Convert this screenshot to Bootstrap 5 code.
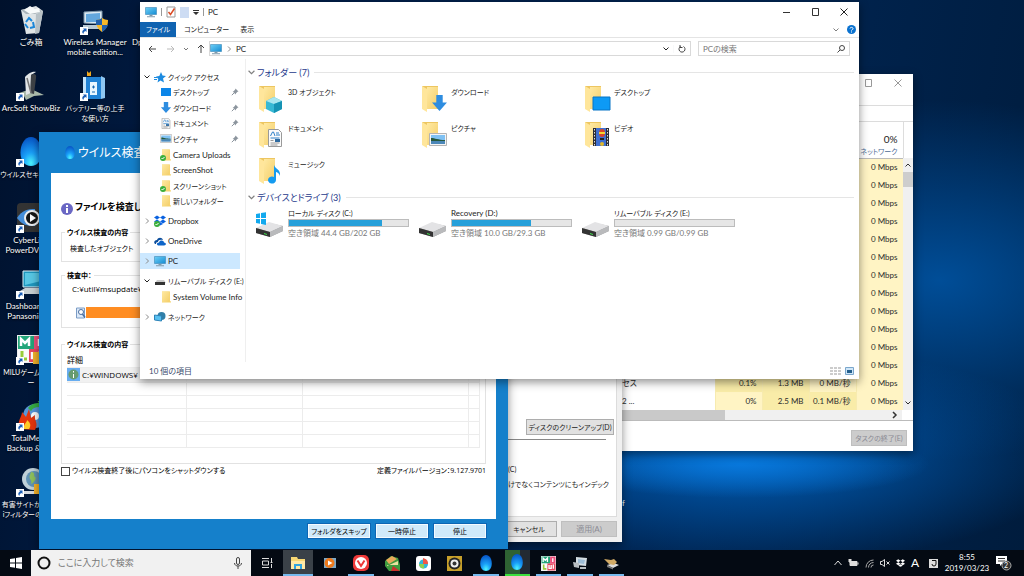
<!DOCTYPE html>
<html lang="ja">
<head>
<meta charset="utf-8">
<meta name="viewport" content="width=device-width, initial-scale=1">
<title>PC</title>
<link href="https://cdn.jsdelivr.net/npm/bootstrap@5.3.0/dist/css/bootstrap.min.css" rel="stylesheet">
<style>
html,body{height:100%}
body{font-family:Lato,"Noto Sans CJK JP",sans-serif;font-feature-settings:"palt";font-size:8px;line-height:10px;color:#222;overflow:hidden}
svg{display:block;flex:none}
a{color:inherit;text-decoration:none}
button,input{font:inherit;font-feature-settings:inherit;color:inherit}
button{padding:0;border:0;background:none}
.kana{font-size:7px}
.desk{min-height:100vh;background:
 radial-gradient(ellipse 190px 34px at 740px 464px,#0878dc 0,rgba(8,110,210,0) 100%),
 radial-gradient(ellipse 330px 110px at 750px 455px,rgba(0,100,195,.9) 0,rgba(0,80,165,0) 100%),
 radial-gradient(ellipse 290px 180px at 940px 280px,rgba(0,80,156,.95) 0,rgba(0,60,120,0) 100%),
 linear-gradient(100deg,#00112c 0,#001c45 20%,#002450 70%,#001c3d 100%)}
.icons{grid-template-columns:62px 66px 60px;grid-auto-rows:66px;color:#fff;text-shadow:0 1px 2px #000}
.icons a{display:flex;flex-direction:column;align-items:center;text-align:center;white-space:nowrap;padding-top:5px;gap:2px}
.stray{left:620px;top:498px;color:#fff}
.win{position:absolute;background:#fff;box-shadow:0 3px 9px rgba(0,0,0,.45)}
.muted-ink{color:#777}
/* task manager */
.w-task{left:600px;right:111px;top:74px;bottom:125px;color:#2b2b2b}
.t-bar{height:31px;gap:21px;padding:5px 11px 0 0;color:#999}
.t-tabs{height:17px;border-top:1px solid #dcdcdc;border-bottom:1px solid #dcdcdc}
.t-grid{border-collapse:collapse;table-layout:fixed;width:303px}
.t-grid th{height:36px;vertical-align:bottom;text-align:right;font-weight:400;padding:0 5px 1px 0;color:#4c6a94;border-right:1px solid #ddd;border-bottom:1px solid #bbb;line-height:12px;white-space:nowrap}
.t-grid th b{display:block;font-weight:400;font-size:10px;color:#222}
.t-grid td{height:18px;padding:0 5px 0 0;text-align:right;background:#fff4c4;border-right:1px solid #f7ebb0;white-space:nowrap}
.t-grid td:first-child{background:#fff;text-align:left;padding-left:22px}
.t-grid .hot{background:#f9eca8}
.v-scroll{width:10px;margin-top:84px;background:#f0f0f0;height:252px;top:0;right:0}
.v-thumb{height:15px;background:#cdcdcd;width:10px}
.h-scroll{height:10px;background:#f0f0f0;margin-right:11px}
.h-scroll i{display:block;width:125px;background:#c9c9c9}
.t-foot{border-top:1px solid #bbb;padding:9px 6px 0 0}
.grey-btn{background:#e1e1e1;border:1px solid #adadad;height:16px;line-height:13px;white-space:nowrap}
.grey-btn:disabled{background:#ccc;border-color:#bfbfbf;color:#8b8b94}
.w55{width:56px}.w88{width:88px}
/* properties */
.w-prop{left:300px;right:402px;top:150px;bottom:34px;background:#f0f0f0;padding:4px 5px 5px}
.sheet{border:1px solid #dcdcdc;background:#fff;padding:0 2px 27px 0;white-space:nowrap}
.sheet hr{margin:4px 8px 24px 0;border-color:#888;opacity:1}
.sheet p{margin:0 0 5px 202px}
/* virus scanner */
.w-virus{left:39px;right:516px;top:132px;bottom:27px;background:#1580cb;padding:0 12px;font-family:"Open Sans","Noto Sans CJK JP",sans-serif;color:#000}
.v-title{height:41px;padding-left:14px;color:#fff;font-size:12px;gap:3px}
.v-body{padding:0 10px;height:346px}
.v-head{padding-top:26px;font-size:9px;line-height:16px;font-weight:700;height:53px;gap:2px;margin-bottom:6px}
fieldset{border:1px solid #e2e2e2;position:relative;margin:0 0 13px;padding:11px 8px 0;white-space:nowrap}
fieldset legend{position:absolute;top:-6px;left:3px;width:auto;margin:0;padding:0 2px;background:#fff;font-size:7px;line-height:11px;font-weight:700;float:none}
.f1{height:30px}.f2{height:53px;margin-bottom:16px;padding:8px 10px}.f3{height:120px;padding:8px 5px;margin-bottom:2px}
.prog{margin-top:13px;padding-left:4px}
.orange{height:11px;background:#ff8d22}
.log{width:100%;table-layout:fixed;border-collapse:collapse}
.log th{font-weight:400;height:14px;padding:0}
.log td{height:13px;border:1px solid #ececec;border-left:0;border-top-color:#eee;padding:0}
.log tr.cur td{height:15px;background:#f1f1f1}
.log tr.cur span{gap:2px}
.chk{appearance:none;width:9px;height:9px;border:1px solid #444;margin:0;background:#fff}
.foot-row label{gap:2px}
.v-btns{gap:6px;padding:5px 10px 0}
.blue-btn{height:14px;background:#d0eafa;border:1px solid #f4fbff;line-height:11px;outline:1px solid #0c66b4;white-space:nowrap;width:52px}
.blue-btn.wide{width:62px}
/* explorer */
.w-exp{left:140px;right:165px;top:2px;bottom:197px;display:flex;flex-direction:column}
.e-title{height:20px;padding:0 11px 0 5px;gap:4px}
.ctl{gap:21px}
.bar1{width:1px;height:8px;background:#999}
.e-tabs{height:16px;border-bottom:1px solid #e4e4e4;padding-right:3px}
.e-tabs a{line-height:15px;padding:0 3px 0 8px}
.e-tabs .file{background:#1063b1;color:#fff;padding:0 0 0 6px;width:36px;white-space:nowrap}
.e-addr{height:21px;padding:0 9px 0 7px}
.box{border:1px solid #d9d9d9;height:15px;min-width:0}
.srch{width:152px;margin-left:7px}
.srch input{border:0;outline:0;width:120px;padding:0 0 0 4px;height:12px;color:#666}
.srch input::placeholder,.t-search input::placeholder{color:#777;opacity:1}
.nav-tree{width:106px;border-right:1px solid #efefef;padding:10px 3px 0 0;flex:none}
.quick{display:grid;grid-template-rows:repeat(9,1fr);height:140px}
.nav-tree a{display:flex;align-items:center;height:16px;padding-left:4px;gap:4px;white-space:nowrap;margin-top:4px}
.nav-tree .top svg+svg{margin-right:-2px}
.nav-tree .quick a{margin-top:0;height:auto;min-height:0}
.nav-tree a.kid{margin-top:0;padding-left:20px;gap:1px;padding-right:3px}
.nav-tree .on{background:#cce8ff;margin-right:2px}
.pane{padding:8px 5px 0 2px;min-width:0}
.pane h2{font-size:9px;line-height:11px;font-weight:400;color:#26398c;margin:0;display:flex;align-items:center;gap:2px;white-space:nowrap}
.pane h2::after{content:"";height:1px;background:#e5e5e5;flex:1;margin-left:3px}
.tiles{display:grid;grid-template-columns:repeat(auto-fill,163px);padding-left:11px;margin:5px 0 1px}
.tiles a{display:flex;gap:3px;height:36px}
.tiles a>span{padding-top:4px}
.tiles svg{margin-top:2px}
.tiles.drives{padding-left:7px;margin-top:4px}
.drives a>span{padding-top:1px;width:121px;flex:none;white-space:nowrap}
.meter{height:8px;border:1px solid #bcbcbc;background:#e6e6e6;margin:1px 0}
.meter i{display:block;height:6px;background:#26a0da}
.e-status{height:17px;padding:0 5px 0 9px;color:#3a4a6b}
/* taskbar */
.tb{position:absolute;inset:auto 0 0 0;height:26px;background:#040a13;color:#fff}
.tb button{height:26px;display:flex;align-items:center;justify-content:center;flex:none}
.sq{width:31px}
.t-search{background:#f1f1f1;width:220px;padding:0 9px 0 6px;gap:7px}
.t-search input{border:0;outline:0;background:none;flex:1;min-width:0;font-size:9px;padding:0;color:#444}
.apps{width:345px}
.apps button{flex:1;margin:0 3px;border-bottom:2px solid transparent;border-top:2px solid transparent}
.apps .run{border-bottom-color:#76b9ed}
.apps .here{background:#3a4148;flex:0 0 30px;margin:0 1px;border-top-color:#3a4148}
.apps .scan{background:linear-gradient(90deg,#2e6233 60%,#232a33 0);border-top:0;border-bottom-color:#3ce03c}
.tray{gap:6px;padding-right:12px}
.ime{font-size:12px;line-height:12px}
.clock{width:46px;text-align:center;line-height:11px}
</style>
</head>
<body>
<svg width="0" height="0" class="position-absolute" aria-hidden="true">
<defs>
<linearGradient id="fg" x2="1" y2="1"><stop stop-color="#ffe9a2"/><stop offset="1" stop-color="#f4cf6a"/></linearGradient>
<radialGradient id="dg" cx=".5" cy=".9" r=".9"><stop stop-color="#4df6ff"/><stop offset=".4" stop-color="#1aa0f8"/><stop offset="1" stop-color="#0652c4"/></radialGradient>
<linearGradient id="mg" x2="1" y2="1"><stop stop-color="#6ed0f7"/><stop offset="1" stop-color="#148bd2"/></linearGradient>
<symbol id="pc" viewBox="0 0 12 12"><path d="M.5 1.500h11v7H.5z" fill="url(#mg)" stroke="#3c86b5" stroke-width=".6"/><path d="M4.500 9h3v1h-3zM2 10.300h8v.9H2z" fill="#7f99ab"/></symbol>
<symbol id="fol" viewBox="0 0 12 12"><path d="M2 .5h8V10l1 .5v1H2z" fill="#f6d571"/><path d="M2 .5h7.500v10.500H2z" fill="url(#fg)"/></symbol>
<symbol id="folg" viewBox="0 0 12 12"><use href="#fol"/><circle cx="3" cy="9" r="3" fill="#3caf3d"/><path d="M1.500 9l1 1 2-2" stroke="#fff" fill="none"/></symbol>
<symbol id="big" viewBox="0 0 28 28"><path d="M0 1h16v23H5z" fill="#edc661"/><path d="M5 2h11v22H5z" fill="url(#fg)"/><path d="M0 1l5 3v23l-5-3z" fill="#ffe69b"/></symbol>
<symbol id="pin" viewBox="0 0 8 8"><path d="M4.500 .5L7.500 3.500l-1 .3-1.500 1.500-.3 1.200L1.700 3.500l1-.3L4.200 1.500z" fill="#8c959e"/><path d="M3 5L.8 7.200" stroke="#8c959e"/></symbol>
<symbol id="cr" viewBox="0 0 6 6"><path d="M2 .5L4.500 3 2 5.500" fill="none" stroke="#8a8a8a"/></symbol>
<symbol id="cd" viewBox="0 0 6 6"><path d="M.5 1.500L3 4l2.500-2.500" fill="none" stroke="currentColor"/></symbol>
<symbol id="drop" viewBox="0 0 12 16"><path d="M6 0C9.500 0 11.800 4 11.800 8.500S9.500 16 6 16 .2 13 .2 8.500 2.500 0 6 0z" fill="url(#dg)"/></symbol>
<symbol id="dbx" viewBox="0 0 12 10"><path d="M3 0l3 2-3 2-3-2zM9 0l3 2-3 2-3-2zM3 4l3 2-3 2-3-2zM9 4l3 2-3 2-3-2zM6 6.600l3 1.900L6 10 3 8.500z" fill="currentColor"/></symbol>
<symbol id="drv" viewBox="0 0 30 20"><path d="M1 11L14 5l14 3v5l-13 6-14-4z" fill="#9b9b9b"/><path d="M1 10L14 4l14 4-13 6z" fill="#e3e3e5"/><path d="M1 10l14 4v5L1 15z" fill="#333"/><path d="M15 14l13-6v5l-13 6z" fill="#b9babc"/><path d="M9 15l3 1v1l-3-1z" fill="#3ee04b"/></symbol>
<symbol id="sc" viewBox="0 0 8 8"><path d="M0 0h8v8H0z" fill="#fff"/><path d="M3 1.500h3.500V5L5.400 4C4 4.500 3.500 5.500 3.400 7 1.500 5.500 2.300 3.500 4 2.600z" fill="#1b5fb8"/></symbol>
<symbol id="pic" viewBox="0 0 18 13"><path d="M.5.5h17v12H.5z" fill="#f5f5f5" stroke="#b3b3b3"/><path d="M2 2h14v9H2z" fill="#7fc1f3"/><path d="M2 5c4 0 7 2 14 2v1H2z" fill="#26583b"/><path d="M2 8h14v3H2z" fill="#4b87b8"/></symbol>
<symbol id="doc" viewBox="0 0 14 18"><path d="M.5.5h10l3 3v14H.5z" fill="#fbfbfb" stroke="#9a9a9a"/><path d="M2.500 7L4.500 3h1L7 7M8 4h3M8 6h4M2.500 9h9" stroke="#2d80c8" fill="none"/><path d="M2.500 14h9M2.500 16h7M2.500 11.500h3" stroke="#999" fill="none"/><path d="M7 10h5v3H7z" fill="#2d6aa0"/></symbol>
<symbol id="down" viewBox="0 0 14 15"><path d="M4 0h6v7h4l-7 8-7-8h4z" fill="#2e8de0"/></symbol>
<symbol id="milu" viewBox="0 0 28 28"><path d="M0 0h28v28H0z" fill="#eee"/><path d="M1 1h16v13H1z" fill="#24a67a"/><path d="M17 1h10v13H17z" fill="#ef4f7c"/><path d="M1 14h11v13H1z" fill="#fafafa"/><path d="M12 14h15v13H12z" fill="#e9475f"/><path d="M4 11V4l4 4 4-4v7M15 17v6h4v-6M23 16v8M22 4v7" fill="none" stroke="#fff" stroke-width="2.500"/><path d="M5 16v8h5" fill="none" stroke="#99cc3a" stroke-width="3"/></symbol>
<symbol id="wx" viewBox="0 0 8 8"><path d="M.5.5l7 7m0-7l-7 7" stroke="currentColor" fill="none"/></symbol>
</defs></svg>

<main class="desk position-relative overflow-hidden">
<nav class="icons d-grid position-absolute" aria-label="デスクトップ">
<a href="#"><svg width="30" height="30" viewBox="0 0 30 30"><path d="M5 5l15-4 7 5-4 22-13 1z" fill="#dfe4e6"/><path d="M5 5l8-2 8 1 6 2-8 3-9 0z" fill="#aab4ba"/><path d="M8 5l6-4 5 3 4-1 1 4-10 2z" fill="#f8fafa"/><path d="M20 9l7-3-4 22-4 1z" fill="#b7c0c5"/><path d="M10 17l3-4 3 3M17 17l1 5-4 1M12 23l-3-4" fill="none" stroke="#1c86d8" stroke-width="2"/></svg>ごみ箱</a>
<a href="#"><svg width="30" height="30" viewBox="0 0 30 30"><path d="M4 7l18-1v13L4 18z" fill="#dbe9f3" stroke="#7b94a7"/><path d="M6 9l14-1v9H6z" fill="#63a7dd"/><path d="M3 20h19v4H3z" fill="#b9cad5"/><path d="M16 15c3 0 4-1 6-2 2 1 4 2 6 2 0 6-2 9-6 12-4-3-6-6-6-12z" fill="#f8b92a"/><path d="M22 13v7h-6v-5c3 0 4-1 6-2zM22 20h6c-1 3-3 5-6 7z" fill="#2160ad"/><use href="#sc" y="22" width="8" height="8"/></svg><span>Wireless Manager<br>mobile edition...</span></a>
<a href="#" class="align-items-start"><svg width="30" height="30"></svg><span class="ps-1">Dp</span></a>
<a href="#"><svg width="30" height="30" viewBox="0 0 30 30"><path d="M3 22l12-4 13 6-10 1-8 4-2-4z" fill="#a9b9a9"/><path d="M9 6c4-5 9-6 11-5l-5 3 2 17-7 3z" fill="#e2e6e8"/><path d="M15 4c3-2 6-1 5 3l-2 16-4-1z" fill="#3c4044"/><path d="M11 7l4 15" stroke="#777" stroke-width="1.500"/><use href="#sc" y="22" width="8" height="8"/></svg>ArcSoft ShowBiz</a>
<a href="#" class="kana"><svg width="30" height="30" viewBox="0 0 30 30"><path d="M7 0l2 2 2-2v5H7z" fill="#f0a81e"/><path d="M5 6h16v22H5z" fill="#2182d5"/><path d="M21 5l4 2v20l-4 1z" fill="#8fc7f2"/><path d="M3 6h3v22H3z" fill="#c5e4fb"/><path d="M10 11h7v13h-7z" fill="#eaf6ff"/><path d="M12 16h3m-1.500-1.500v3M12 21h3" stroke="#1868b0"/><use href="#sc" y="22" width="8" height="8"/></svg><span>バッテリー等の上手<br>な使い方</span></a><i></i>
<a href="#" class="kana"><svg width="30" height="30" viewBox="0 0 30 30"><use href="#drop" x="4" y="0" width="22" height="29"/><use href="#sc" y="22" width="8" height="8"/></svg><span>ウイルスセキュリティ</span></a><i></i><i></i>
<a href="#"><svg width="30" height="30" viewBox="0 0 30 30"><rect x="1" width="28" height="29" rx="4" fill="#333"/><path d="M1 15c5-8 11-9 18-9v17C11 23 6 22 1 15z" fill="#458ed9"/><circle cx="16" cy="15" r="7" fill="#151515" stroke="#eee" stroke-width="2"/><path d="M14 11l6 4-6 4z" fill="#fff"/><use href="#sc" y="22" width="8" height="8"/></svg><span>CyberLink<br>PowerDVD 12</span></a><i></i><i></i>
<a href="#"><svg width="30" height="30" viewBox="0 0 30 30"><path d="M7 2h20v16H7z" fill="#1f97be" stroke="#dceef5"/><path d="M9 4h16v8L9 16z" fill="#58c7e4"/><path d="M4 22l5-3h18l3 3v3H4z" fill="#c9d0d3"/><use href="#sc" y="22" width="8" height="8"/></svg><span>Dashboard for<br>Panasonic PC</span></a><i></i><i></i>
<a href="#" class="kana"><svg width="30" height="30" viewBox="0 0 30 30"><use href="#milu" x="1" width="28" height="28"/><path d="M17 17h12v12H17z" fill="#f3b22a"/><use href="#sc" y="22" width="8" height="8"/></svg><span>MILUゲームメニュ<br>ー</span></a><i></i><i></i>
<a href="#"><svg width="30" height="30" viewBox="0 0 30 30"><circle cx="19" cy="15" r="12" fill="#5796d8"/><circle cx="19" cy="15" r="4" fill="#fff"/><path d="M4 28C0 21 6 16 6 11l4 5 3-8 2 9 4-3c-1 6 4 8 0 15z" fill="#e3350d"/><path d="M8 28c-1-5 3-6 3-9 4 3 4 6 2 9z" fill="#ffcb27"/><path d="M12 7c3-4 7-5 11-5l-2-3 8 4-6 6v-3c-4 0-6 1-8 4z" fill="#37ae44"/><use href="#sc" y="22" width="8" height="8"/></svg><span>TotalMedia<br>Backup &amp; Rec</span></a><i></i><i></i>
<a href="#" class="kana"><svg width="30" height="30" viewBox="0 0 30 30"><circle cx="17" cy="12" r="11" fill="#bfd0d8"/><circle cx="18" cy="12" r="8" fill="#6193b5"/><path d="M15 5c5 0 2 4 4 5s-1 6-4 7c2-4-3-5-1-9z" fill="#8fc05c"/><path d="M6 24h20v3H6z" fill="#d6dadd"/><path d="M18 17h10v10H18z" fill="#f3b22a"/><use href="#sc" y="22" width="8" height="8"/></svg><span>有害サイトから守る<br>iフィルターのセット</span></a>
</nav>
<span class="stray position-absolute">if</span>

<section class="win w-task" aria-label="タスク マネージャー">
<div class="t-bar d-flex justify-content-end align-items-start"><svg width="8" height="8" viewBox="0 0 8 8"><path d="M.5.5h6v7h-6z" fill="none" stroke="currentColor"/></svg><svg width="8" height="8"><use href="#wx"/></svg></div>
<div class="t-tabs"></div>
<table class="t-grid">
<colgroup><col style="width:115px"><col style="width:47px"><col style="width:47px"><col style="width:47px"><col style="width:47px"></colgroup>
<thead><tr><th></th><th></th><th></th><th></th><th scope="col" class="kana"><b>0%</b>ネットワーク</th></tr></thead>
<tbody>
<tr><td></td><td></td><td></td><td></td><td>0 Mbps</td></tr><tr><td></td><td></td><td></td><td></td><td>0 Mbps</td></tr>
<tr><td></td><td></td><td></td><td></td><td>0 Mbps</td></tr><tr><td></td><td></td><td></td><td></td><td>0 Mbps</td></tr>
<tr><td></td><td></td><td></td><td></td><td>0 Mbps</td></tr><tr><td></td><td></td><td></td><td></td><td>0 Mbps</td></tr>
<tr><td></td><td></td><td></td><td></td><td>0 Mbps</td></tr><tr><td></td><td></td><td></td><td></td><td>0 Mbps</td></tr>
<tr><td></td><td></td><td></td><td></td><td>0 Mbps</td></tr><tr><td></td><td></td><td></td><td></td><td>0 Mbps</td></tr>
<tr><td></td><td></td><td></td><td></td><td>0 Mbps</td></tr><tr><td></td><td></td><td></td><td></td><td>0 Mbps</td></tr>
<tr><td>セス</td><td class="hot">0.1%</td><td class="hot">1.3 MB</td><td>0 MB/秒</td><td>0 Mbps</td></tr>
<tr><td>2 ...</td><td>0%</td><td class="hot">2.5 MB</td><td class="hot">0.1 MB/秒</td><td>0 Mbps</td></tr>
</tbody></table>
<div class="v-scroll position-absolute d-flex flex-column align-items-center"><svg class="my-1" width="6" height="6" viewBox="0 0 6 6"><path d="M.5 4.500L3 2l2.500 2.500" fill="none" stroke="#333"/></svg><div class="v-thumb"></div><svg class="mt-auto mb-1" width="6" height="6"><use href="#cd"/></svg></div>
<div class="h-scroll d-flex justify-content-between"><i></i><svg class="m-1 mt-0" width="6" height="10" viewBox="0 0 6 10"><path d="M1 2l3 3-3 3" fill="none" stroke="#333" stroke-width="1.500"/></svg></div>
<div class="t-foot d-flex justify-content-end"><button class="grey-btn w55 kana" disabled>タスクの終了(E)</button></div>
</section>

<section class="win w-prop d-flex flex-column" aria-label="プロパティ">
<div class="sheet kana flex-grow-1 d-flex flex-column justify-content-end align-items-stretch">
<div class="text-end"><button class="grey-btn w88">ディスクのクリーンアップ(D)</button></div>
<hr><p>(C)</p><p class="mb-0">けでなくコンテンツにもインデック</p>
</div>
<div class="d-flex justify-content-end pt-1 gap-1"><button class="grey-btn w55 kana">キャンセル</button><button class="grey-btn w55" disabled>適用(A)</button></div>
</section>

<section class="win w-virus" aria-label="ウイルス検査">
<div class="v-title d-flex align-items-center text-nowrap"><svg width="10" height="13"><use href="#drop"/></svg>ウイルス検査</div>
<div class="v-body bg-white">
<div class="v-head d-flex text-nowrap"><svg class="mt-1" width="12" height="12" viewBox="0 0 12 12"><circle cx="6" cy="6" r="6" fill="#6a67c4"/><path d="M5 5h2v5H5zM5 2h2v2H5z" fill="#fff"/></svg>ファイルを検査し</div>
<fieldset class="f1 kana"><legend>ウイルス検査の内容</legend>検査したオブジェクト</fieldset>
<fieldset class="f2"><legend>検査中：</legend>C:¥util¥msupdate¥
<div class="prog d-flex"><svg width="10" height="12" viewBox="0 0 10 12"><path d="M.5 1h8v10h-8z" fill="#dce9f8" stroke="#7b9cc6"/><circle cx="5" cy="5" r="2.500" fill="#fff" stroke="#4a6ea0"/><path d="M6.500 7L9 10.500" stroke="#4a6ea0" stroke-width="1.500"/></svg><div class="orange flex-grow-1"></div></div></fieldset>
<fieldset class="f3"><legend>ウイルス検査の内容</legend>
<table class="log"><colgroup><col style="width:119px"><col style="width:116px"><col style="width:166px"><col></colgroup>
<tr><th scope="col">詳細</th><th></th><th></th><th></th></tr>
<tr class="cur"><td><span class="d-flex align-items-center"><svg width="13" height="13" viewBox="0 0 13 13"><path d="M0 0h13v13H0z" fill="#68adf0"/><circle cx="6.500" cy="6.500" r="5" fill="#679b70"/><path d="M6 6h1v4H6zM6 3h1v1.500H6z" fill="#fff"/></svg>C:¥WINDOWS¥</span></td><td></td><td></td><td></td></tr>
<tr><td></td><td></td><td></td><td></td></tr><tr><td></td><td></td><td></td><td></td></tr><tr><td></td><td></td><td></td><td></td></tr><tr><td></td><td></td><td></td><td></td></tr><tr><td></td><td></td><td></td><td></td></tr>
</table></fieldset>
<div class="foot-row kana d-flex justify-content-between text-nowrap"><label class="d-flex align-items-center"><input type="checkbox" class="chk">ウイルス検査終了後にパソコンをシャットダウンする</label><span>定義ファイルバージョン：9.127.9701</span></div>
</div>
<div class="v-btns kana d-flex justify-content-end"><button class="blue-btn wide">フォルダをスキップ</button><button class="blue-btn">一時停止</button><button class="blue-btn">停止</button></div>
</section>

<section class="win w-exp" aria-label="PC">
<div class="e-title d-flex align-items-center">
<svg width="12" height="12"><use href="#pc"/></svg><i class="bar1"></i>
<svg width="10" height="12" viewBox="0 0 10 12"><path d="M1 1h8v10H1z" fill="#fff" stroke="#999"/><path d="M2.500 6l2 2.500 4-6" stroke="#dc4a24" stroke-width="1.500" fill="none"/></svg>
<svg width="9" height="12"><rect width="9" height="11" y="1" fill="#cddcf3"/></svg>
<svg width="6" height="8" viewBox="0 0 6 8"><path d="M0 2h6v1H0zM0 4h6L3 7z" fill="#333"/></svg><i class="bar1"></i>PC
<div class="ctl ms-auto d-flex align-items-center"><svg width="8" height="8"><path d="M1 4h7v1H1z" fill="#333"/></svg><svg width="8" height="8"><path d="M1.500.5h6v7h-6z" fill="none" stroke="#333"/></svg><svg width="8" height="8"><use href="#wx"/></svg></div>
</div>
<nav class="e-tabs kana d-flex align-items-center"><a class="file" href="#">ファイル</a><a href="#">コンピューター</a><a href="#">表示</a><svg class="ms-auto me-2 text-black-50" width="6" height="6"><use href="#cd"/></svg><svg width="9" height="9" viewBox="0 0 9 9"><circle cx="4.500" cy="4.500" r="4.500" fill="#0a72d0"/><path d="M3 3.500C3 2 6 2 6 3.500S4.500 4.500 4.500 5.500M4.500 6.500v1" stroke="#fff" fill="none"/></svg></nav>
<div class="e-addr d-flex align-items-center">
<svg class="me-2" width="42" height="10" viewBox="0 0 42 10" fill="none" stroke="#444"><path d="M9 5H2m3-3L2 5l3 3"/><path d="M20 5h7m-3-3l3 3-3 3" stroke="#bbb"/><path d="M37 4l2 2 2-2" stroke="#777"/></svg>
<svg class="me-1" width="8" height="10" viewBox="0 0 8 10"><path d="M4 9V1M1 4l3-3 3 3" fill="none" stroke="#444"/></svg>
<div class="box flex-grow-1 d-flex align-items-center gap-1"><svg width="12" height="12"><use href="#pc"/></svg><svg width="6" height="6"><use href="#cr"/></svg>PC
<svg class="ms-auto" width="6" height="6"><use href="#cd"/></svg><i class="bar1 bg-secondary-subtle"></i><svg class="me-1" width="8" height="8" viewBox="0 0 8 8"><path d="M5.500 1.500a3 3 0 1 1-3 0M2 0v2.500h2.500" fill="none" stroke="#444"/></svg></div>
<div class="box srch d-flex align-items-center justify-content-between pe-1"><input type="text" aria-label="PCの検索" placeholder="PCの検索"><svg width="8" height="8" viewBox="0 0 8 8"><circle cx="5" cy="3" r="2.500" fill="none" stroke="#444"/><path d="M3 5L.5 7.500" stroke="#444"/></svg></div>
</div>
<div class="d-flex flex-grow-1">
<nav class="nav-tree">
<div class="quick">
<a class="top kana" href="#"><svg width="6" height="6"><use href="#cd"/></svg><svg width="12" height="12" viewBox="0 0 12 12"><path d="M7 1l1.500 3.500 3.500.5-3 2.500 1 4-3.500-2L3.500 11.500l.8-3.500L2 5.500l3.300-.5z" fill="#1d8be0"/><path d="M0 6.500h3M0 8.500h3" stroke="#1d8be0"/></svg>クイック アクセス</a>
<a class="kid kana" href="#"><svg width="12" height="12"><path d="M1 2h10v8H1z" fill="#0c86e8"/></svg>デスクトップ<svg class="ms-auto" width="8" height="8"><use href="#pin"/></svg></a>
<a class="kid kana" href="#"><svg width="12" height="11"><use href="#down"/></svg>ダウンロード<svg class="ms-auto" width="8" height="8"><use href="#pin"/></svg></a>
<a class="kid kana" href="#"><svg width="12" height="11"><use href="#doc"/></svg>ドキュメント<svg class="ms-auto" width="8" height="8"><use href="#pin"/></svg></a>
<a class="kid kana" href="#"><svg width="12" height="9"><use href="#pic"/></svg>ピクチャ<svg class="ms-auto" width="8" height="8"><use href="#pin"/></svg></a>
<a class="kid" href="#"><svg width="12" height="12"><use href="#folg"/></svg>Camera Uploads</a>
<a class="kid" href="#"><svg width="12" height="12"><use href="#fol"/></svg>ScreenShot</a>
<a class="kid kana" href="#"><svg width="12" height="12"><use href="#folg"/></svg>スクリーンショット</a>
<a class="kid kana" href="#"><svg width="12" height="12"><use href="#fol"/></svg>新しいフォルダー</a>
</div>
<a class="top" href="#"><svg width="6" height="6"><use href="#cr"/></svg><svg width="12" height="12" viewBox="0 0 12 12"><use href="#dbx" width="12" height="11" color="#0a62e0"/><circle cx="3" cy="9" r="3" fill="#3caf3d"/><path d="M1.500 9l1 1 2-2" stroke="#fff" fill="none"/></svg>Dropbox</a>
<a class="top" href="#"><svg width="6" height="6"><use href="#cr"/></svg><svg width="12" height="9" viewBox="0 0 12 9"><path d="M2 7C-1 7 0 3 3 3c1-3 5-3 6 0-4-1-5 1-5 2-2 0-2 1-2 2z" fill="#0b4d9c"/><path d="M4 8.500c-2-1-1-3 1-3 1-3 5-2 5 0 2.500 0 2.500 3 0 3z" fill="#0d64c8"/></svg>OneDrive</a>
<a class="top on" href="#"><svg width="6" height="6"><use href="#cr"/></svg><svg width="12" height="12"><use href="#pc"/></svg>PC</a>
<a class="top kana" href="#"><svg width="6" height="6"><use href="#cd"/></svg><svg width="12" height="12"><path d="M3 5h7l2 3H1z" fill="#ccc"/><path d="M1 7h10v3H1z" fill="#333"/></svg>リムーバブル ディスク (E:)</a>
<a class="kid" href="#"><svg width="12" height="12"><use href="#fol"/></svg>System Volume Info</a>
<a class="top kana" href="#"><svg width="6" height="6"><use href="#cr"/></svg><svg width="12" height="12" viewBox="0 0 12 12"><circle cx="7.500" cy="5" r="4" fill="#317fa8"/><path d="M.5 4l7 1v5l-7-1z" fill="#58c0f0" stroke="#2d83b8"/></svg>ネットワーク</a>
</nav>
<div class="pane flex-grow-1">
<h2><svg class="text-black-50" width="7" height="7"><use href="#cd"/></svg>フォルダー (7)</h2>
<div class="tiles kana">
<a href="#"><svg width="26" height="30" viewBox="0 0 26 30"><use href="#big" width="28" height="28"/><path d="M7 16l8-4 8 4v8l-8 4-8-4z" fill="#36b8d4"/><path d="M7 16l8-4 8 4-8 3z" fill="#a8e6ef"/><path d="M15 19l8-3v8l-8 4z" fill="#1593b4"/></svg><span>3D オブジェクト</span></a>
<a href="#"><svg width="26" height="30" viewBox="0 0 26 30"><use href="#big" width="28" height="28"/><use href="#down" x="10" y="10" width="15" height="16"/></svg><span>ダウンロード</span></a>
<a href="#"><svg width="26" height="30" viewBox="0 0 26 30"><use href="#big" width="28" height="28"/><path d="M8 12h17v13H8z" fill="#0d9af5" stroke="#0874c5"/></svg><span>デスクトップ</span></a>
<a href="#"><svg width="26" height="30" viewBox="0 0 26 30"><use href="#big" width="28" height="28"/><use href="#doc" x="9" y="8" width="14" height="18"/></svg><span>ドキュメント</span></a>
<a href="#"><svg width="26" height="30" viewBox="0 0 26 30"><use href="#big" width="28" height="28"/><use href="#pic" x="7" y="12" width="18" height="13"/></svg><span>ピクチャ</span></a>
<a href="#"><svg width="26" height="30" viewBox="0 0 26 30"><use href="#big" width="28" height="28"/><path d="M8 7h16v18H8z" fill="#2c2c33"/><path d="M11 7h10v18H11z" fill="#3f6fd0"/><path d="M9.500 8v17M22.500 8v17" stroke="#ddd" stroke-dasharray="1.500 1.500"/><ellipse cx="17" cy="12" rx="3" ry="4" fill="#d9452c"/><path d="M14 11h6v2h-6z" fill="#f6d42f"/><path d="M15 17h4v2h-4z" fill="#222"/><circle cx="17" cy="23" r="2" fill="#e0b82b"/></svg><span>ビデオ</span></a>
<a href="#"><svg width="26" height="30" viewBox="0 0 26 30"><use href="#big" width="28" height="28"/><path d="M15 8c1 4 7 4 6 11-1-3-3-4-4-4v8a4 3.500 0 1 1-2-3z" fill="#149bf0"/></svg><span>ミュージック</span></a>
</div>
<h2><svg class="text-black-50" width="7" height="7"><use href="#cd"/></svg>デバイスとドライブ (3)</h2>
<div class="tiles drives">
<a href="#"><svg width="30" height="30" viewBox="0 0 30 30"><use href="#drv" y="9" width="30" height="20"/><path d="M1 5l4-.7V9H1zM6 4l5-.8V9H6zM1 10h4v4.700L1 14zM6 10h5v6l-5-.9z" fill="#12a9ee"/></svg><span><span class="kana">ローカル ディスク (C:)</span><span class="meter d-block"><i style="width:78%"></i></span><span class="muted-ink">空き領域 44.4 GB/202 GB</span></span></a>
<a href="#"><svg width="30" height="30" viewBox="0 0 30 30"><use href="#drv" y="9" width="30" height="20"/></svg><span>Recovery (D:)<span class="meter d-block"><i style="width:66%"></i></span><span class="muted-ink">空き領域 10.0 GB/29.3 GB</span></span></a>
<a href="#"><svg width="30" height="30" viewBox="0 0 30 30"><use href="#drv" y="9" width="30" height="20"/></svg><span><span class="kana">リムーバブル ディスク (E:)</span><span class="meter d-block"><i style="width:0%"></i></span><span class="muted-ink">空き領域 0.99 GB/0.99 GB</span></span></a>
</div>
</div>
</div>
<div class="e-status d-flex align-items-center"><span>10 個の項目</span><svg class="ms-auto me-1" width="11" height="8" viewBox="0 0 11 8"><path d="M0 1h3M0 4h3M0 7h3M4 1h3M8 1h3M4 4h3M8 4h3M4 7h3M8 7h3" stroke="#999"/></svg><svg width="9" height="8" viewBox="0 0 9 8"><path d="M.5.5h8v7h-8z" fill="#cfe6f8" stroke="#7ba7cc"/><path d="M2 3h5v3H2z" fill="#245f8c"/></svg></div>
</section>

<footer class="tb d-flex align-items-center">
<button class="sq" aria-label="スタート"><svg width="12" height="12" viewBox="0 0 12 12"><path d="M0 2l5-.8V5.500H0zM6 1l6-1v5.500H6zM0 6.500h5v4.300L0 10zM6 6.500h6V12l-6-1z" fill="#fff"/></svg></button>
<div class="t-search d-flex align-items-center h-100"><svg width="14" height="14"><circle cx="7" cy="7" r="5.500" fill="none" stroke="#111" stroke-width="2"/></svg><input type="text" aria-label="検索" placeholder="ここに入力して検索"><svg width="8" height="12" viewBox="0 0 8 12"><rect x="2.500" y=".5" width="3" height="7" rx="1.500" fill="none" stroke="#444"/><path d="M.5 6c0 4 7 4 7 0M4 9v3" fill="none" stroke="#444"/></svg></div>
<button class="sq" aria-label="タスク ビュー"><svg width="12" height="12" viewBox="0 0 12 12" fill="none" stroke="#ddd"><path d="M1 1.500h7M1 10.500h7M1.500 4h6v4h-6zM10.500 1v4M10.500 7v4M9.500 5.500h2"/></svg></button>
<div class="apps d-flex">
<button class="run here" aria-label="エクスプローラー"><svg width="16" height="14" viewBox="0 0 16 14"><path d="M1 1h6l1 2h7v10H1z" fill="#f7d774"/><path d="M1 5h14v8H1z" fill="#ffe9a6"/><path d="M4 8h8v5h-2v-3H6v3H4z" fill="#31a5e0"/></svg></button>
<button aria-label="メディア"><svg width="14" height="14" viewBox="0 0 14 14"><path d="M1 2h12v10H1z" fill="#7ba8c8"/><circle cx="6.500" cy="7" r="5" fill="#ee7a1c"/><path d="M5 4.500l4.500 2.500L5 9.500z" fill="#fff"/></svg></button>
<button class="run" aria-label="Vivaldi"><svg width="16" height="16" viewBox="0 0 16 16"><rect width="16" height="16" rx="5" fill="#ef3939"/><circle cx="8" cy="8" r="6" fill="#fff"/><path d="M4.500 5.500L8 11l3.500-5.500" fill="none" stroke="#ef3939" stroke-width="2"/></svg></button>
<button aria-label="画像"><svg width="15" height="15" viewBox="0 0 15 15"><path d="M0 5l6-5 7 2 2 7v6H4l-4-5z" fill="#3f9b3f"/><path d="M1 4l6-4 5 3-8 5z" fill="#e8a95a"/><path d="M2 10l11-5v4H2z" fill="#e9e2a0"/><path d="M8 10l7 5H6z" fill="#c9302c"/></svg></button>
<button aria-label="カラー"><svg width="15" height="15" viewBox="0 0 15 15"><rect width="15" height="15" rx="3" fill="#fff"/><circle cx="7.500" cy="8" r="4.500" fill="#31b7d8"/><path d="M7 2c4 1 5 3 5 6H7z" fill="#ef5848"/><path d="M3 8h5v4.500c-3 0-5-2-5-4.500z" fill="#8fd04e"/></svg></button>
<button aria-label="カメラ"><svg width="15" height="15" viewBox="0 0 15 15"><path d="M0 0h15v15H0z" fill="#c7a02b"/><circle cx="7.500" cy="7.500" r="6" fill="#222"/><circle cx="7.500" cy="7.500" r="4" fill="#eee"/><circle cx="7.500" cy="7.500" r="2" fill="#333"/></svg></button>
<button class="run" aria-label="ウイルスセキュリティ"><svg width="12" height="16"><use href="#drop"/></svg></button>
<button class="run scan" aria-label="ウイルス検査"><svg width="12" height="16"><use href="#drop"/></svg></button>
<button class="run" aria-label="MILU"><svg width="15" height="15"><use href="#milu"/></svg></button>
<button class="run" aria-label="システム"><svg width="15" height="14" viewBox="0 0 15 14"><path d="M3 1l11 1-1 8-10-1z" fill="#d4dde3"/><path d="M5 3l7 1-1 4-6-1z" fill="#9dbdd6"/><path d="M0 6l6 1v5l-5-1zM7 11h6v2H7z" fill="#b8bec2"/></svg></button>
<button class="run" aria-label="ディスク"><svg width="15" height="14" viewBox="0 0 15 14"><path d="M3 9l7-2 5 2-6 3z" fill="#ddd"/><path d="M3 9l6 3v1.500L3 11z" fill="#777"/><path d="M0 3l7 1 3-1 3 3-3 3-5-1z" fill="#d1aa66"/></svg></button>
</div>
<div class="tray ms-auto d-flex align-items-center">
<svg width="8" height="6" viewBox="0 0 8 6"><path d="M.5 5L4 1l3.500 4" fill="none" stroke="#ddd"/></svg>
<svg width="11" height="8" viewBox="0 0 11 8"><path d="M2 2.500h7v4H2zM10 3.500v2M1 0v3h2V0" fill="#ddd" stroke="#ddd"/></svg>
<svg width="9" height="9" viewBox="0 0 9 9" fill="none" stroke="#aaa"><path d="M1 8.500A7.500 7.500 0 0 1 8.500 1M3.500 8.500a5 5 0 0 1 5-5M6 8.500A2.500 2.500 0 0 1 8.500 6"/></svg>
<svg width="10" height="8" viewBox="0 0 10 8" fill="none" stroke="#ddd"><path d="M.5 2.500H2L4.500.5v7L2 5.500H.5zM6.500 2.500l3 3m0-3l-3 3"/></svg>
<svg width="9" height="8"><use href="#dbx"/></svg>
<span class="ime">A</span>
<svg class="ms-1" width="9" height="9" viewBox="0 0 9 9"><path d="M0 0h9v9H0z" fill="#ddd"/><path d="M3 1.500h4V5a2 2 0 0 1-4 0" fill="none" stroke="#111"/></svg>
<div class="clock">8:55<br>2019/03/23</div>
<svg width="16" height="16" viewBox="0 0 16 16"><path d="M0 1h11v8H6l-2 2V9H0z" fill="#fff"/><path d="M2 3.500h7M2 6h7" stroke="#333"/><circle cx="10.500" cy="10.500" r="4.500" fill="#333" stroke="#aaa"/><text x="8" y="13" font-size="7" fill="#fff">2</text></svg>
</div>
</footer>
</main>
<script src="https://cdn.jsdelivr.net/npm/bootstrap@5.3.0/dist/js/bootstrap.bundle.min.js"></script>
</body>
</html>
